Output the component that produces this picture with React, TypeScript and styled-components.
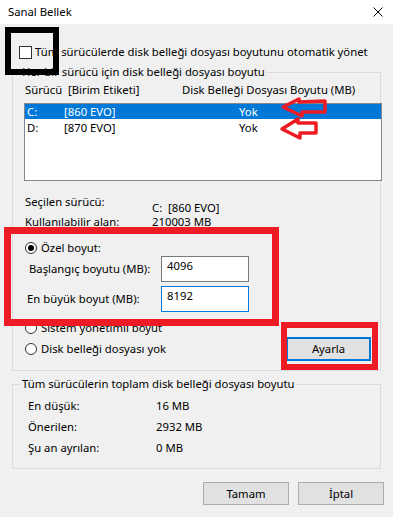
import React from "react";
import styled, { createGlobalStyle } from "styled-components";

const GlobalStyle = createGlobalStyle`
  html, body { margin: 0; padding: 0; background: #f0f0f0; }
  body {
    font-family: "Noto Sans", "Segoe UI", sans-serif;
    font-size: 11.3px;
    color: #000;
  }
  * { box-sizing: border-box; }
`;

const Window = styled.div`
  position: relative;
  width: 393px;
  height: 517px;
  overflow: hidden;
  background: #f0f0f0;
  display: flex;
  flex-direction: column;
  line-height: 16px;
`;

const TitleBar = styled.div`
  height: 24px;
  flex: none;
  background: #fff;
  display: flex;
  align-items: center;
  justify-content: space-between;
  padding: 0 10px 0 8px;
`;

const Body = styled.div`
  display: flex;
  flex-direction: column;
  align-items: flex-start;
  padding: 20px 9px 0 12px;
`;

const CheckRow = styled.label`
  display: flex;
  align-items: center;
  gap: 3px;
  height: 16px;
  margin-left: 7px;
  white-space: nowrap;
`;

const CheckBox = styled.span`
  width: 13px;
  height: 13px;
  border: 1px solid #333;
  background: #fff;
  flex: none;
`;

const GroupBox = styled.div<{ $mt: number; $pt: number; $pb: number; $pl: number }>`
  position: relative;
  width: 369px;
  margin-top: ${(p) => p.$mt}px;
  border: 1px solid #dcdcdc;
  padding: ${(p) => p.$pt}px 0 ${(p) => p.$pb}px ${(p) => p.$pl}px;
  display: flex;
  flex-direction: column;
`;

const Legend = styled.span`
  position: absolute;
  top: -9px;
  left: 8px;
  padding: 0 1px;
  background: #f0f0f0;
  white-space: nowrap;
`;

const HeaderRow = styled.div`
  display: grid;
  grid-template-columns: 43px 114px auto;
  padding-left: 1px;
  height: 16px;
  white-space: nowrap;
`;

const ListBox = styled.div`
  margin-top: 5px;
  margin-right: -2px;
  height: 78px;
  border: 1px solid #828790;
  background: #fff;
  display: flex;
  flex-direction: column;
`;

const ListRow = styled.div<{ $selected?: boolean }>`
  display: grid;
  grid-template-columns: 37px 175px auto;
  padding-left: 2px;
  height: 15px;
  line-height: 15px;
  margin-bottom: 1px;
  background: ${(p) => (p.$selected ? "#0078d7" : "transparent")};
  color: ${(p) => (p.$selected ? "#fff" : "#000")};
  white-space: nowrap;
`;

const InfoGrid = styled.div<{ $mt: number; $col: number; $gap: number }>`
  display: grid;
  grid-template-columns: ${(p) => p.$col}px auto;
  grid-auto-rows: 16px;
  row-gap: ${(p) => p.$gap}px;
  margin-top: ${(p) => p.$mt}px;
  padding-left: 1px;
  white-space: nowrap;
`;

const InfoValue = styled.span<{ $drop: number }>`
  margin-top: ${(p) => p.$drop}px;
  line-height: 14px;
  height: 14px;
`;

const RadioRow = styled.label<{ $mt: number }>`
  display: flex;
  align-items: center;
  gap: 4px;
  height: 16px;
  margin-top: ${(p) => p.$mt}px;
  padding-left: 1px;
  white-space: nowrap;
`;

const Radio = styled.span<{ $checked?: boolean }>`
  position: relative;
  width: 12px;
  height: 12px;
  border: 1px solid #333;
  border-radius: 50%;
  background: #fff;
  flex: none;
  &::after {
    content: "";
    display: ${(p) => (p.$checked ? "block" : "none")};
    position: absolute;
    left: 2px;
    top: 2px;
    width: 6px;
    height: 6px;
    border-radius: 50%;
    background: #000;
  }
`;

const FieldRow = styled.div<{ $mt: number }>`
  display: grid;
  grid-template-columns: 137px 88px;
  align-items: center;
  height: 26px;
  margin-top: ${(p) => p.$mt}px;
  white-space: nowrap;
`;

const FieldLabel = styled.span<{ $indent: number }>`
  padding-left: ${(p) => p.$indent}px;
`;

const TextBox = styled.div<{ $focused?: boolean }>`
  width: 88px;
  height: 26px;
  border: 1px solid ${(p) => (p.$focused ? "#0078d7" : "#7a7a7a")};
  background: #fff;
  padding: 1px 5px;
  line-height: 16px;
`;

const BottomRow = styled.div`
  display: flex;
  align-items: center;
  justify-content: space-between;
  height: 24px;
  margin-top: 1px;
  padding-right: 9px;
`;

const Button = styled.button<{ $default?: boolean; $w: number; $h: number }>`
  width: ${(p) => p.$w}px;
  height: ${(p) => p.$h}px;
  padding: 0;
  margin: 0;
  font: inherit;
  color: #000;
  background: #e1e1e1;
  border: ${(p) => (p.$default ? "2px solid #0078d7" : "1px solid #adadad")};
  border-radius: 0;
  line-height: 16px;
`;

const ButtonRow = styled.div`
  align-self: flex-end;
  display: flex;
  gap: 9px;
  margin-top: 13px;
`;

const Mark = styled.div<{ $x: number; $y: number; $w: number; $h: number; $t: number; $c: string }>`
  position: absolute;
  left: ${(p) => p.$x}px;
  top: ${(p) => p.$y}px;
  width: ${(p) => p.$w}px;
  height: ${(p) => p.$h}px;
  border: ${(p) => p.$t}px solid ${(p) => p.$c};
  pointer-events: none;
`;

const ArrowLayer = styled.svg`
  position: absolute;
  left: 0;
  top: 0;
  pointer-events: none;
`;

const CloseIcon = () => (
  <svg width="10" height="10" viewBox="0 0 10 10">
    <path d="M0.5 0.5 L9.5 9.5 M9.5 0.5 L0.5 9.5" stroke="#000" strokeWidth="1" fill="none" />
  </svg>
);

export default function App() {
  return (
    <>
      <GlobalStyle />
      <Window>
        <TitleBar>
          <span>Sanal Bellek</span>
          <CloseIcon />
        </TitleBar>
        <Body>
          <CheckRow>
            <CheckBox />
            <span>Tüm sürücülerde disk belleği dosyası boyutunu otomatik yönet</span>
          </CheckRow>

          <GroupBox $mt={12} $pt={9} $pb={9} $pl={11}>
            <Legend>Her bir sürücü için disk belleği dosyası boyutu</Legend>
            <HeaderRow>
              <span>Sürücü</span>
              <span>[Birim Etiketi]</span>
              <span>Disk Belleği Dosyası Boyutu (MB)</span>
            </HeaderRow>
            <ListBox>
              <ListRow $selected>
                <span>C:</span>
                <span>[860 EVO]</span>
                <span>Yok</span>
              </ListRow>
              <ListRow>
                <span>D:</span>
                <span>[870 EVO]</span>
                <span>Yok</span>
              </ListRow>
            </ListBox>

            <InfoGrid $mt={13} $col={127} $gap={4}>
              <span>Seçilen sürücü:</span>
              <InfoValue $drop={7}>C:&nbsp;&nbsp;[860 EVO]</InfoValue>
              <span>Kullanılabilir alan:</span>
              <InfoValue $drop={1}>210003 MB</InfoValue>
            </InfoGrid>

            <RadioRow $mt={10}>
              <Radio $checked />
              <span>Özel boyut:</span>
            </RadioRow>
            <FieldRow $mt={0}>
              <FieldLabel $indent={5}>Başlangıç boyutu (MB):</FieldLabel>
              <TextBox>4096</TextBox>
            </FieldRow>
            <FieldRow $mt={4}>
              <FieldLabel $indent={3}>En büyük boyut (MB):</FieldLabel>
              <TextBox $focused>8192</TextBox>
            </FieldRow>

            <RadioRow $mt={8}>
              <Radio />
              <span>Sistem yönetimli boyut</span>
            </RadioRow>
            <BottomRow>
              <RadioRow $mt={0}>
                <Radio />
                <span>Disk belleği dosyası yok</span>
              </RadioRow>
              <Button $default $w={85} $h={24}>Ayarla</Button>
            </BottomRow>
          </GroupBox>

          <GroupBox $mt={13} $pt={13} $pb={12} $pl={14}>
            <Legend>Tüm sürücülerin toplam disk belleği dosyası boyutu</Legend>
            <InfoGrid $mt={0} $col={128} $gap={5}>
              <span>En düşük:</span>
              <span>16 MB</span>
              <span>Önerilen:</span>
              <span>2932 MB</span>
              <span>Şu an ayrılan:</span>
              <span>0 MB</span>
            </InfoGrid>
          </GroupBox>

          <ButtonRow>
            <Button $w={86} $h={23}>Tamam</Button>
            <Button $w={86} $h={23}>İptal</Button>
          </ButtonRow>
        </Body>

        <Mark $x={5} $y={27} $w={54} $h={48} $t={6} $c="#000" />
        <Mark $x={4} $y={227} $w={275} $h={99} $t={7} $c="#ed1c24" />
        <Mark $x={281} $y={322} $w={97} $h={48} $t={6} $c="#ed1c24" />
        <ArrowLayer width="393" height="517" viewBox="0 0 393 517">
          <path
            d="M283 107 L299 99 L299 102 L325 101 L325 112 L302 112 L302 116 Z"
            fill="none"
            stroke="#ed1c24"
            strokeWidth="3.5"
            strokeLinejoin="round"
          />
          <path
            d="M282 129 L298 119 L298 123 L316 123 L316 133 L300 133 L300 138 Z"
            fill="none"
            stroke="#ed1c24"
            strokeWidth="3.5"
            strokeLinejoin="round"
          />
        </ArrowLayer>
      </Window>
    </>
  );
}
